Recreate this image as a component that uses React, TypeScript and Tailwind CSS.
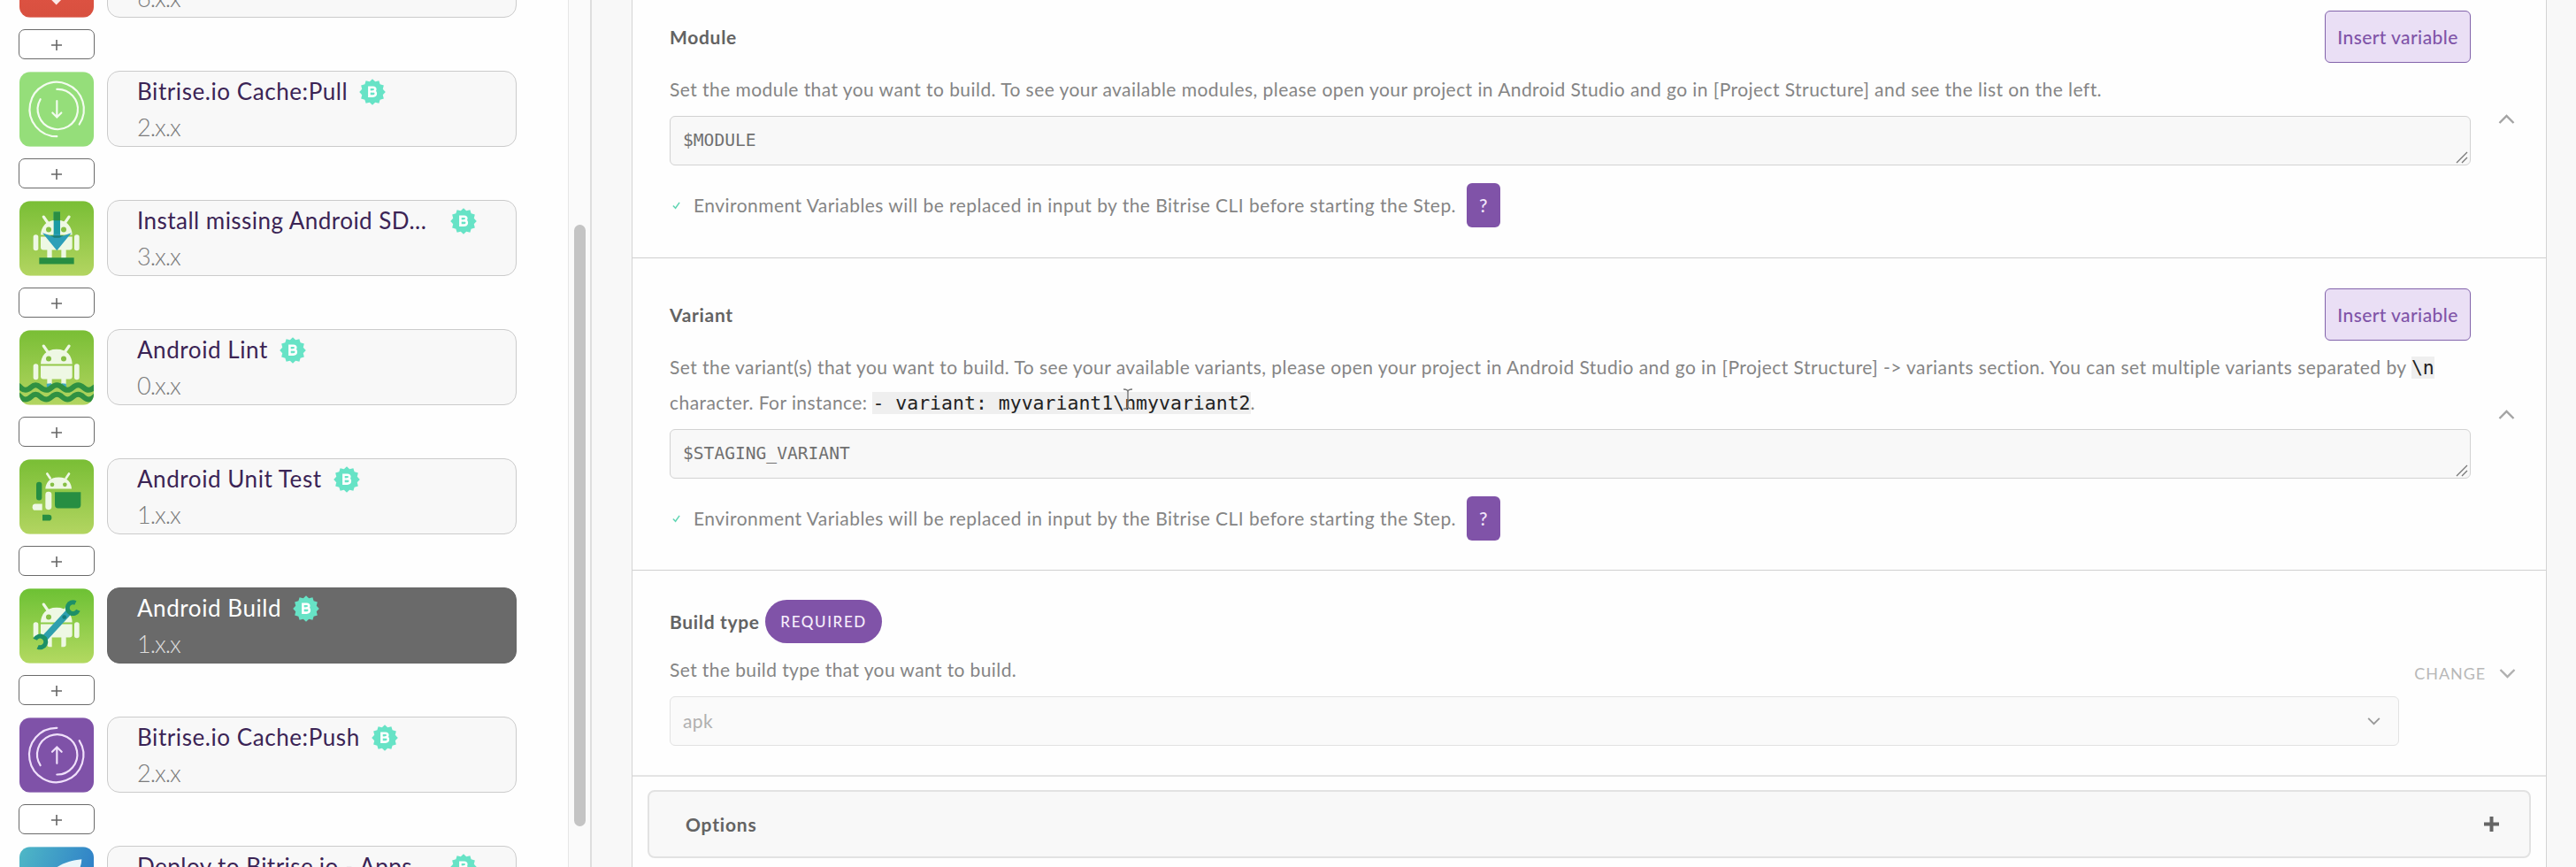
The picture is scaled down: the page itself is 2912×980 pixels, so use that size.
import type { ReactNode } from "react";

/* ---------- small drawings ---------- */

function VerifiedBadge() {
  const points = Array.from({ length: 24 }, (_, i) => {
    const r = i % 2 === 0 ? 14.8 : 12.2;
    const a = (i * Math.PI) / 12;
    return `${(15 + r * Math.sin(a)).toFixed(2)},${(15 - r * Math.cos(a)).toFixed(2)}`;
  }).join(" ");
  return (
    <svg viewBox="0 0 30 30" className="h-[30px] w-[30px] shrink-0">
      <polygon points={points} fill="#67e3c6" />
      <path
        d="M11.4 9.8h4.3c1.7 0 2.6.9 2.6 2.3 0 1.1-.6 1.8-1.5 2.2 1.2.3 2 1.2 2 2.5 0 1.8-1.2 2.8-3.2 2.8h-4.2z"
        fill="none"
        stroke="#fff"
        strokeWidth="2.6"
      />
      <path d="M11.4 14.5h5" stroke="#fff" strokeWidth="2.2" />
    </svg>
  );
}

function Chevron({ up = false, size = "h-[11px] w-[19px]", color = "#a3a3a3" }: { up?: boolean; size?: string; color?: string }) {
  return (
    <svg viewBox="0 0 19 11" className={size} fill="none" stroke={color} strokeWidth="2.4">
      <path d={up ? "M1.5 10 9.5 2l8 8" : "M1.5 1l8 8 8-8"} />
    </svg>
  );
}

function IconTile({ from, to, diagonal = false, id, children }: { from: string; to: string; diagonal?: boolean; id: string; children?: ReactNode }) {
  return (
    <svg viewBox="0 0 252 254" className="h-[85px] w-[84px]">
      <defs>
        <linearGradient id={id} x1="0" y1="0" x2={diagonal ? "1" : "0"} y2={diagonal ? "0.35" : "1"}>
          <stop offset="0" stopColor={from} />
          <stop offset="1" stopColor={to} />
        </linearGradient>
        <clipPath id={`${id}-clip`}>
          <rect width="252" height="254" rx="36" />
        </clipPath>
      </defs>
      <g clipPath={`url(#${id}-clip)`}>
        <rect width="252" height="254" fill={`url(#${id})`} />
        {children}
      </g>
    </svg>
  );
}

function Robot() {
  return (
    <g fill="#eef8e4">
      <path d="M72 115c1-26 17-50 54-50s52 24 53 50z" />
      <path d="M82 54l14 20M168 54l-14 20" stroke="#eef8e4" strokeWidth="10" strokeLinecap="round" />
      <circle cx="99" cy="97" r="9" fill="#86bf45" />
      <circle cx="150" cy="97" r="9" fill="#86bf45" />
      <path d="M72 121h107v36q0 9-9 9H81q-9 0-9-9z" />
      <rect x="47" y="114" width="17" height="54" rx="8" />
      <rect x="186" y="114" width="17" height="54" rx="8" />
      <path d="M94 160h16v38h-8q-8 0-8-8zM142 160h16v30q0 8-8 8h-8z" />
    </g>
  );
}

function CloneIcon() {
  return (
    <IconTile id="tile-clone" from="#e8574a" to="#d8503f">
      <path d="M110 190l15 15 15-15M125 150v50" stroke="#fbe9e7" strokeWidth="8" fill="none" strokeLinecap="round" />
    </IconTile>
  );
}

function PullIcon() {
  return (
    <IconTile id="tile-pull" from="#95de7a" to="#95de7a">
      <g fill="none" stroke="#f3fcef" strokeWidth="6.5" strokeLinecap="round">
        <path d="M127 219A92 92 0 1 1 203 178" />
        <path d="M127 59A68 68 0 1 1 71 93" />
        <path d="M127 99v54M112 139l15 15 15-15" />
      </g>
    </IconTile>
  );
}

function PushIcon() {
  return (
    <IconTile id="tile-push" from="#7f52a8" to="#7f52a8">
      <g fill="none" stroke="#f0e0fb" strokeWidth="6.5" strokeLinecap="round">
        <path d="M127 35A92 92 0 1 0 203 78" />
        <path d="M127 193A68 68 0 1 0 71 162" />
        <path d="M127 155v-54M111 116l16-16 16 16" />
      </g>
    </IconTile>
  );
}

function InstallIcon() {
  return (
    <IconTile id="tile-install" from="#79be35" to="#b3d561">
      <Robot />
      <path d="M116 37h22v80h-22z" fill="#1c9ba4" />
      <path d="M116 37h22v29h-22z" fill="#2a8f42" />
      <path d="M78 108l38 14V112h22v10l38-14-49 60z" fill="#2d9fb8" />
      <path d="M104 117h46l-14 8h-18z" fill="#1a7f78" />
      <path d="M67 192h118v22H67z" fill="#278e42" />
    </IconTile>
  );
}

function LintIcon() {
  return (
    <IconTile id="tile-lint" from="#79be35" to="#b3d561">
      <Robot />
      <path d="M92 182l16-2 3 16-18 4zM143 180l15 2 2 18-18-6z" fill="#3fa9bd" />
      <g fill="none" stroke="#2f9142" strokeWidth="18">
        <path d="M-12 186c18 0 14 17 32 17s20-17 35-17 18 17 36 17 18-17 36-17 18 17 36 17 18-17 36-17 18 17 36 17 18-17 36-17" />
        <path d="M-12 218c18 0 14 17 32 17s20-17 35-17 18 17 36 17 18-17 36-17 18 17 36 17 18-17 36-17 18 17 36 17 18-17 36-17" />
      </g>
    </IconTile>
  );
}

function UnitTestIcon() {
  return (
    <IconTile id="tile-unit" from="#79be35" to="#b3d561">
      <path d="M88 100c1-20 14-39 45-39s43 19 44 39z" fill="#eef8e4" />
      <path d="M94 49l10 15M168 49l-10 15" stroke="#eef8e4" strokeWidth="8" strokeLinecap="round" />
      <circle cx="111" cy="86" r="7" fill="#86bf45" />
      <circle cx="154" cy="86" r="7" fill="#86bf45" />
      <rect x="57" y="77" width="19" height="62" rx="9" fill="#278e42" />
      <path d="M120 111h88v44q0 11-11 11h-66q-11 0-11-11z" fill="#278e42" />
      <rect x="88" y="110" width="21" height="61" rx="10" fill="#eef8e4" />
      <path d="M54 151h23v22H54q-10 0-10-11t10-11z" fill="#eef8e4" />
      <path d="M78 188h21q10 0 10 10t-10 10H78z" fill="#278e42" />
    </IconTile>
  );
}

function BuildIcon() {
  return (
    <IconTile id="tile-build" from="#6dc134" to="#b3d961">
      <Robot />
      <path d="M168 79L82 172" stroke="#2f9fae" strokeWidth="22" fill="none" />
      <path d="M199 74A19 19 0 1 1 190 49" stroke="#1d9067" strokeWidth="15" fill="none" />
      <path d="M53 173A19 19 0 1 1 62 198" stroke="#1d9067" strokeWidth="15" fill="none" />
      <circle cx="152" cy="97" r="7" fill="#147c7c" />
    </IconTile>
  );
}

function DeployIcon() {
  return (
    <IconTile id="tile-deploy" diagonal from="#4fb8c6" to="#2f80c8">
      <path d="M211 42c-38 3-78 16-104 44l80 20c14-20 23-42 24-64z" fill="#eaf7fb" />
    </IconTile>
  );
}

/* ---------- workflow steps ---------- */

type Step = { title: string; version: string; icon: ReactNode; wide?: boolean; active?: boolean };

const steps: Step[] = [
  { title: "", version: "6.x.x", icon: <CloneIcon /> },
  { title: "Bitrise.io Cache:Pull", version: "2.x.x", icon: <PullIcon /> },
  { title: "Install missing Android SD...", version: "3.x.x", icon: <InstallIcon />, wide: true },
  { title: "Android Lint", version: "0.x.x", icon: <LintIcon /> },
  { title: "Android Unit Test", version: "1.x.x", icon: <UnitTestIcon /> },
  { title: "Android Build", version: "1.x.x", icon: <BuildIcon />, active: true },
  { title: "Bitrise.io Cache:Push", version: "2.x.x", icon: <PushIcon /> },
  { title: "Deploy to Bitrise.io - Apps...", version: "", icon: <DeployIcon />, wide: true },
];

function StepRow({ title, version, icon, wide, active }: Step) {
  return (
    <li className="flex h-[146px] shrink-0 flex-col">
      <div className="flex h-[86px] items-center">
        <div className="flex w-[100px] shrink-0 pl-px">{icon}</div>
        <div
          className={
            "flex h-[86px] w-[463px] flex-col rounded-[14px] border pl-[33px] " +
            (active ? "border-[#666] bg-[#6a6a6a]" : "border-[#cbcbcb] bg-[#f8f8f8]")
          }
        >
          <div className="flex h-[45px] items-center">
            <span
              className={
                "whitespace-nowrap text-[26px] leading-[45px] " +
                (wide ? "w-[354px] tracking-[0.47px] " : "mr-[13px] tracking-[0.57px] ") +
                (active ? "text-white" : "text-[#3b2455]")
              }
            >
              {title}
            </span>
            {title && <VerifiedBadge />}
          </div>
          <span
            className={
              "text-[27px] leading-[36px] font-light tracking-[-1px] " + (active ? "text-[#dcdcdc]" : "text-[#7c7c7c]")
            }
          >
            {version}
          </span>
        </div>
      </div>
      <button className="mt-[13px] flex h-[34px] w-[86px] items-center justify-center rounded-[7px] border border-[#6a6a6a] bg-white">
        <svg viewBox="0 0 12 12" className="mt-[2px] h-3 w-3" stroke="#666" strokeWidth="1.6">
          <path d="M6 0v12M0 6h12" />
        </svg>
      </button>
    </li>
  );
}

/* ---------- inputs ---------- */

function InsertVariable() {
  return (
    <button className="h-[59px] w-[165px] rounded-md border-[1.5px] border-[#8263ab] bg-[#eadff5] text-[21px] font-medium tracking-[0.41px] whitespace-nowrap text-[#8054a8]">
      Insert variable
    </button>
  );
}

function InputSection({ title, value, className, children }: { title: string; value: string; className: string; children: ReactNode }) {
  return (
    <section className={"flex border-b border-[#d0d0d0] pr-[35px] pl-[42px] " + className}>
      <div className="w-[2036px] shrink-0">
        <div className="flex items-center justify-between">
          <h3 className="text-[21px] font-bold tracking-[0.7px] text-[#636363]">{title}</h3>
          <InsertVariable />
        </div>
        <p className="mt-[10px] text-[21px] leading-10 tracking-[0.44px] text-[#858585]">{children}</p>
        <div className="mt-[10px] flex h-[56px] items-center justify-between rounded-md border-[1.5px] border-[#d2d2d2] bg-[#f8f8f8] pl-[14px] font-['DejaVu_Sans_Mono',monospace] text-[19.6px] text-[#707070]">
          <span>{value}</span>
          <svg viewBox="0 0 14 14" className="mr-[2px] mb-px h-[14px] w-[14px] self-end" stroke="#777" strokeWidth="1.3">
            <path d="M1 13L13 1M7 13l6-6" />
          </svg>
        </div>
        <div className="mt-5 flex h-[50px] items-center text-[21px] tracking-[0.46px] text-[#858585]">
          <svg viewBox="0 0 10 10" className="mr-[15px] ml-[3px] h-[9px] w-[9px]" fill="none" stroke="#62d6b4" strokeWidth="1.7">
            <path d="M1 5l3 3 5-7" />
          </svg>
          <span className="whitespace-nowrap">
            Environment Variables will be replaced in input by the Bitrise CLI before starting the Step.
          </span>
          <button className="ml-[12px] h-[50px] w-[38px] rounded-md bg-[#8053a8] text-[21px] font-medium text-[#f1e6fa]">?</button>
        </div>
      </div>
      <div className="flex flex-1 items-center justify-end">
        <div className="mb-[34px]">
          <Chevron up />
        </div>
      </div>
    </section>
  );
}

export default function App() {
  return (
    <div className="flex h-[980px] w-[2912px] overflow-hidden bg-[#f8f8f8] font-[Lato,sans-serif]">
      <aside className="flex w-[669px] shrink-0 justify-between border-r-2 border-[#dedede] bg-[#fefefe]">
        <ol className="-mt-[66px] ml-[21px] flex flex-col">
          {steps.map((s) => (
            <StepRow key={s.title} {...s} />
          ))}
        </ol>
        <div className="flex w-[25px] justify-center border-l border-[#e6e6e6] bg-[#fafafa]">
          <div className="mt-[254px] h-[680px] w-[13px] rounded-full bg-[#c4c4c4]" />
        </div>
      </aside>

      <main className="ml-[45px] flex w-[2165px] shrink-0 flex-col border-x-[1.5px] border-[#d4d4d4] bg-[#fefefe]">
        <InputSection title="Module" value="$MODULE" className="h-[292px] shrink-0 pt-3">
          Set the module that you want to build. To see your available modules, please open your project in Android
          Studio and go in [Project Structure] and see the list on the left.
        </InputSection>

        <InputSection title="Variant" value="$STAGING_VARIANT" className="h-[353px] shrink-0 pt-[34px]">
          Set the variant(s) that you want to build. To see your available variants, please open your project in
          Android Studio and go in [Project Structure] -&gt; variants section. You can set multiple variants separated
          by{" "}
          <code className="bg-[#efefef] font-['DejaVu_Sans_Mono',monospace] text-[21.5px] leading-5 tracking-normal text-[#222]">
            \n
          </code>
          <br />
          character. For instance:{" "}
          <code className="relative bg-[#efefef] font-['DejaVu_Sans_Mono',monospace] text-[21.5px] leading-5 tracking-normal text-[#222]">
            - variant: myvariant1\nmyvariant2
            <svg viewBox="0 0 12 24" className="absolute top-[-4px] left-[283px] h-[24px] w-[12px]" fill="none" stroke="#777" strokeWidth="1.4">
              <path d="M1 1c3 0 5 1 5 3 0-2 2-3 5-3M6 4v16M1 23c3 0 5-1 5-3 0 2 2 3 5 3" />
            </svg>
          </code>
          .
        </InputSection>

        <section className="flex h-[233px] shrink-0 border-b-2 border-[#e4e4e4] pt-[33px] pr-[34px] pl-[42px]">
          <div className="w-[1955px]">
            <div className="flex h-[49px] items-center">
              <h3 className="text-[21px] font-bold tracking-[0.65px] text-[#636363]">Build type</h3>
              <span className="ml-[6px] flex h-[49px] w-[132px] items-center justify-center rounded-full bg-[#8053a8] pl-px text-[17px] font-medium tracking-[1.6px] text-[#f5edfb]">
                REQUIRED
              </span>
            </div>
            <p className="mt-[10px] text-[21px] leading-10 tracking-[0.4px] text-[#858585]">
              Set the build type that you want to build.
            </p>
            <div className="mt-[10px] flex h-[56px] items-center justify-between rounded-md border-[1.5px] border-[#e2e2e2] bg-[#fafafa] pr-5 pl-[14px] text-[21px] tracking-[0.4px] text-[#b0b0b0]">
              <span>apk</span>
              <Chevron size="h-[9px] w-[15px]" color="#999" />
            </div>
          </div>
          <div className="mt-[68px] flex h-[30px] flex-1 items-center justify-end gap-[15px]">
            <span className="text-[18px] tracking-[0.9px] text-[#b8b8b8]">CHANGE</span>
            <Chevron color="#b0b0b0" />
          </div>
        </section>

        <button className="mx-[17px] mt-[15px] flex h-[77px] shrink-0 items-center justify-between rounded-lg border-2 border-[#e2e2e2] bg-[#f8f8f8] pr-[34px] pl-[41px]">
          <span className="text-[21px] font-bold tracking-[0.8px] text-[#636363]">Options</span>
          <svg viewBox="0 0 17 17" className="h-[17px] w-[17px]" stroke="#666" strokeWidth="4">
            <path d="M8.5 0v17M0 8.5h17" />
          </svg>
        </button>
      </main>
    </div>
  );
}
